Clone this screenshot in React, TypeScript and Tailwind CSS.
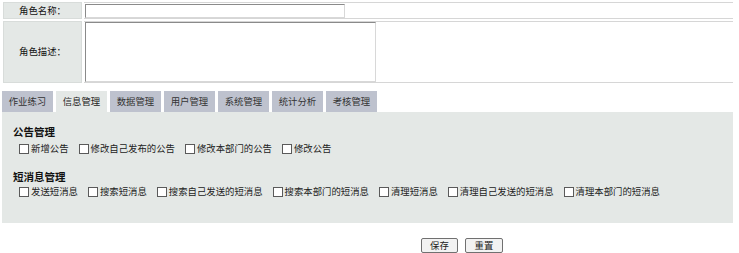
import React from "react";

const font = { fontFamily: '"Noto Sans CJK SC", "Noto Sans", sans-serif' };

function Check({ label }: { label: string }) {
  return (
    <div className="flex items-center gap-[2px] whitespace-nowrap">
      <span className="inline-block w-[10px] h-[10px] border border-[#5a5a5a] bg-white" />
      <span>{label}</span>
    </div>
  );
}

const tabs = ["作业练习", "信息管理", "数据管理", "用户管理", "系统管理", "统计分析", "考核管理"];

export default function App() {
  return (
    <div className="w-[739px] h-[253px] bg-white text-[9.4px] text-[#222] leading-none" style={font}>
      <div className="pt-[2px] pl-[3px] w-[733px] flex flex-col gap-[2px]">
        <div className="flex h-[17px] gap-[2px]">
          <div className="w-[79px] bg-[#e4e8e6] border border-[#d8dcda] flex items-center justify-center text-[#111]">角色名称：</div>
          <div className="flex-1 border-y border-[#d6d6d6] flex items-center pl-[1px]">
            <div className="w-[260px] h-[14px] bg-white border border-t-[#8a8a8a] border-l-[#8a8a8a] border-r-[#d8d8d8] border-b-[#d8d8d8]" />
          </div>
        </div>
        <div className="flex h-[62px] gap-[2px]">
          <div className="w-[79px] bg-[#e4e8e6] border border-[#d8dcda] flex items-center justify-center text-[#111]">角色描述：</div>
          <div className="flex-1 border-y border-[#d6d6d6] flex items-center pl-[1px]">
            <div className="w-[291px] h-[60px] bg-white border border-t-[#8a8a8a] border-l-[#8a8a8a] border-r-[#d8d8d8] border-b-[#d8d8d8]" />
          </div>
        </div>
      </div>

      <div className="mt-[8px] ml-[2px] w-[731px]">
        <div className="flex gap-[3px] h-[21px]">
          {tabs.map((t, i) => (
            <div
              key={t}
              className={
                "w-[51px] flex items-center justify-center whitespace-nowrap " +
                (i === 1 ? "bg-[#e4e8e6] text-[#222]" : "bg-[#bec2ce] text-[#333]")
              }
            >
              {t}
            </div>
          ))}
        </div>
        <div className="h-[111px] bg-[#e4e8e6] pl-[11px] pt-[15px]">
          <div className="text-[10.5px] font-bold text-[#111]">公告管理</div>
          <div className="flex gap-[10px] pl-[6px] mt-[6px]">
            <Check label="新增公告" />
            <Check label="修改自己发布的公告" />
            <Check label="修改本部门的公告" />
            <Check label="修改公告" />
          </div>
          <div className="text-[10.5px] font-bold text-[#111] mt-[18px]">短消息管理</div>
          <div className="flex gap-[10px] pl-[6px] mt-[5px]">
            <Check label="发送短消息" />
            <Check label="搜索短消息" />
            <Check label="搜索自己发送的短消息" />
            <Check label="搜索本部门的短消息" />
            <Check label="清理短消息" />
            <Check label="清理自己发送的短消息" />
            <Check label="清理本部门的短消息" />
          </div>
        </div>
      </div>

      <div className="flex gap-[7px] pl-[421px] mt-[15px]">
        <button className="w-[37px] h-[15px] border border-[#707070] rounded-[2px] bg-[#f2f2f2] text-[9.4px] leading-none">保存</button>
        <button className="w-[38px] h-[15px] border border-[#707070] rounded-[2px] bg-[#f2f2f2] text-[9.4px] leading-none">重置</button>
      </div>
    </div>
  );
}
